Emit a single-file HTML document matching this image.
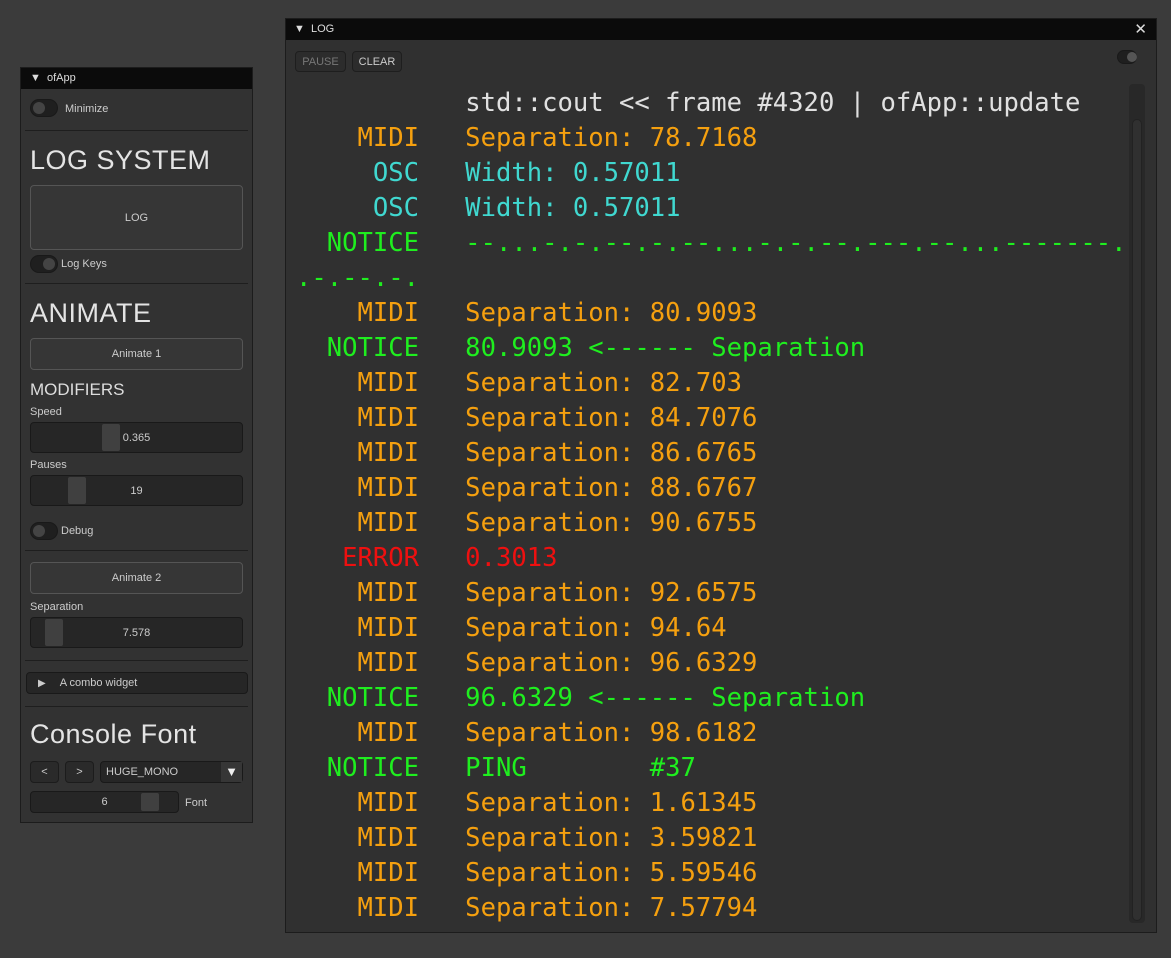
<!DOCTYPE html><html><head><style>
*{margin:0;padding:0;box-sizing:border-box}
body{width:1171px;height:958px;background:#3b3b3b;position:relative;overflow:hidden;font-family:"Liberation Sans",sans-serif;color:#d8d8d8}
.a{position:absolute}
.panel{background:#323232;border:1px solid #1c1c1c}
.tb{background:#0b0b0b;color:#ddd;font-size:11px}
.btn{background:#363636;border:1px solid #555;border-radius:4px;font-size:11px;display:flex;align-items:center;justify-content:center;color:#ccc}
.fr{background:#262626;border:1px solid #191919;border-radius:4px;font-size:11px;display:flex;align-items:center;justify-content:center;color:#ccc}
.grab{background:#404040;border-radius:2px}
.sep{height:1px;background:#1e1e1e}
.tog{width:28px;height:18px;border-radius:9px;background:#1f1f1f;border:1px solid #191919}
.tog i{position:absolute;left:2px;top:2px;width:12px;height:12px;border-radius:6px;background:#444}
.lbl{font-size:11px;color:#ccc}
.h{font-size:27px;color:#e4e4e4;letter-spacing:0.5px}
.log{font-family:"DejaVu Sans Mono","Liberation Mono",monospace;font-size:25.55px;white-space:pre;line-height:35px}
.m{color:#f5a00f}.o{color:#40d8d0}.n{color:#1fee1f}.e{color:#ee1010}.w{color:#e0e0e0}
</style></head><body>
<div class="a panel" style="left:20px;top:67px;width:233px;height:756px"></div>
<div class="a tb" style="left:21px;top:68px;width:231px;height:21px;line-height:21px;padding-left:9px">▼&nbsp;&nbsp;ofApp</div>
<div class="a tog" style="left:30px;top:99px"><i></i></div><div class="a lbl" style="left:65px;top:103px">Minimize</div>
<div class="a sep" style="left:25px;top:130px;width:223px"></div>
<div class="a h" style="left:30px;top:145px">LOG SYSTEM</div>
<div class="a btn" style="left:30px;top:185px;width:213px;height:65px">LOG</div>
<div class="a tog" style="left:30px;top:255px"><i style="left:12px"></i></div><div class="a lbl" style="left:61px;top:258px">Log Keys</div>
<div class="a sep" style="left:25px;top:283px;width:223px"></div>
<div class="a h" style="left:30px;top:298px">ANIMATE</div>
<div class="a btn" style="left:30px;top:338px;width:213px;height:32px">Animate 1</div>
<div class="a" style="left:30px;top:380px;font-size:17px;color:#ddd">MODIFIERS</div>
<div class="a lbl" style="left:30px;top:406px">Speed</div>
<div class="a fr" style="left:30px;top:422px;width:213px;height:31px">0.365</div><div class="a grab" style="left:102px;top:424px;width:18px;height:27px"></div>
<div class="a lbl" style="left:30px;top:459px">Pauses</div>
<div class="a fr" style="left:30px;top:475px;width:213px;height:31px">19</div><div class="a grab" style="left:68px;top:477px;width:18px;height:27px"></div>
<div class="a tog" style="left:30px;top:522px"><i></i></div><div class="a lbl" style="left:61px;top:525px">Debug</div>
<div class="a sep" style="left:25px;top:550px;width:223px"></div>
<div class="a btn" style="left:30px;top:562px;width:213px;height:32px">Animate 2</div>
<div class="a lbl" style="left:30px;top:601px">Separation</div>
<div class="a fr" style="left:30px;top:617px;width:213px;height:31px">7.578</div><div class="a grab" style="left:45px;top:619px;width:18px;height:27px"></div>
<div class="a sep" style="left:25px;top:660px;width:223px"></div>
<div class="a fr" style="left:26px;top:672px;width:222px;height:22px;justify-content:flex-start;padding-left:11px"><span style="font-size:10px">▶</span><span style="margin-left:14px">A combo widget</span></div>
<div class="a sep" style="left:25px;top:706px;width:223px"></div>
<div class="a h" style="left:30px;top:719px">Console Font</div>
<div class="a btn" style="left:30px;top:761px;width:29px;height:22px;background:#2a2a2a;border-color:#1c1c1c">&lt;</div>
<div class="a btn" style="left:65px;top:761px;width:29px;height:22px;background:#2a2a2a;border-color:#1c1c1c">&gt;</div>
<div class="a fr" style="left:100px;top:761px;width:143px;height:22px;justify-content:flex-start;padding-left:5px">HUGE_MONO</div>
<div class="a" style="left:221px;top:762px;width:21px;height:20px;background:#363636;color:#eee;font-size:13px;text-align:center;line-height:20px">▼</div>
<div class="a fr" style="left:30px;top:791px;width:149px;height:22px">6</div><div class="a grab" style="left:141px;top:793px;width:18px;height:18px"></div>
<div class="a lbl" style="left:185px;top:797px">Font</div>

<div class="a panel" style="left:285px;top:18px;width:872px;height:915px;background:#303030"></div>
<div class="a tb" style="left:286px;top:19px;width:870px;height:21px;line-height:21px;padding-left:8px">▼&nbsp;&nbsp;LOG<span style="position:absolute;right:9px;font-size:15px">✕</span></div>
<div class="a btn" style="left:295px;top:51px;width:51px;height:21px;color:#777;background:#2c2c2c;border-color:#1e1e1e">PAUSE</div>
<div class="a btn" style="left:352px;top:51px;width:50px;height:21px;background:#2c2c2c;border-color:#1e1e1e">CLEAR</div>
<div class="a tog" style="left:1117px;top:50px;width:20px;height:14px"><i style="left:9px;top:1px;width:10px;height:10px;background:#555"></i></div>
<div class="a" style="left:1129px;top:84px;width:16px;height:839px;background:#282828;border-radius:4px"></div>
<div class="a" style="left:1132px;top:119px;width:10px;height:802px;background:#303030;border-radius:5px;border:1px solid #222"></div>
<div class="a log" style="left:296px;top:86px">           <span class="w">std::cout &lt;&lt; frame #4320 | ofApp::update</span>
<span class="m">    MIDI   Separation: 78.7168</span>
<span class="o">     OSC   Width: 0.57011</span>
<span class="o">     OSC   Width: 0.57011</span>
<span class="n">  NOTICE   --...-.-.--.-.--...-.-.--.---.--...-------.</span>
<span class="n">.-.--.-.</span>
<span class="m">    MIDI   Separation: 80.9093</span>
<span class="n">  NOTICE   80.9093 &lt;------ Separation</span>
<span class="m">    MIDI   Separation: 82.703</span>
<span class="m">    MIDI   Separation: 84.7076</span>
<span class="m">    MIDI   Separation: 86.6765</span>
<span class="m">    MIDI   Separation: 88.6767</span>
<span class="m">    MIDI   Separation: 90.6755</span>
<span class="e">   ERROR   0.3013</span>
<span class="m">    MIDI   Separation: 92.6575</span>
<span class="m">    MIDI   Separation: 94.64</span>
<span class="m">    MIDI   Separation: 96.6329</span>
<span class="n">  NOTICE   96.6329 &lt;------ Separation</span>
<span class="m">    MIDI   Separation: 98.6182</span>
<span class="n">  NOTICE   PING        #37</span>
<span class="m">    MIDI   Separation: 1.61345</span>
<span class="m">    MIDI   Separation: 3.59821</span>
<span class="m">    MIDI   Separation: 5.59546</span>
<span class="m">    MIDI   Separation: 7.57794</span></div>
</body></html>
